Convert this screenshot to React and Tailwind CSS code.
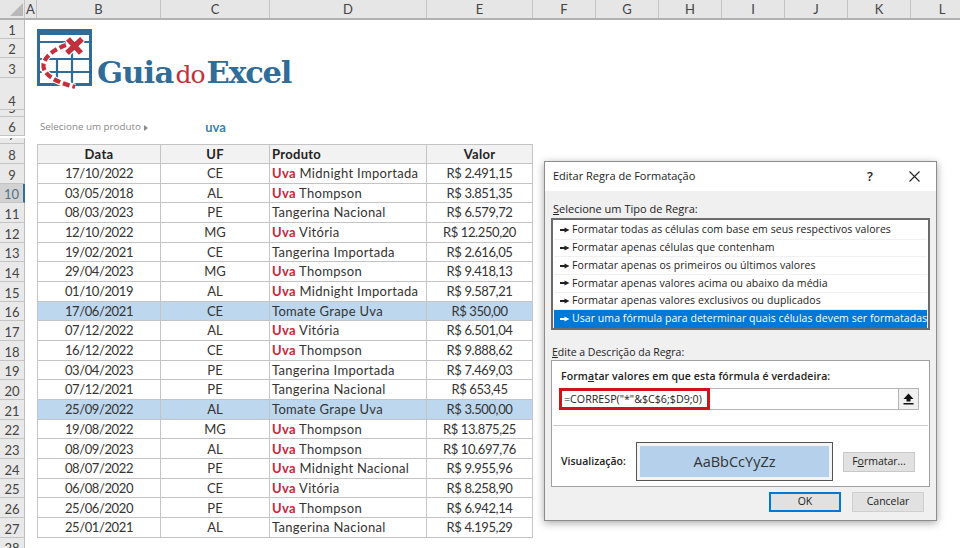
const cols = [["A", 12], ["B", 124], ["C", 109], ["D", 157], ["E", 106], ["F", 63], ["G", 63], ["H", 63], ["I", 63], ["J", 63], ["K", 63], ["L", 63]];

const data = [
  ["17/10/2022", "CE", "Uva", " Midnight Importada", "R$ 2.491,15"],
  ["03/05/2018", "AL", "Uva", " Thompson", "R$ 3.851,35"],
  ["08/03/2023", "PE", "", "Tangerina Nacional", "R$ 6.579,72"],
  ["12/10/2022", "MG", "Uva", " Vitória", "R$ 12.250,20"],
  ["19/02/2021", "CE", "", "Tangerina Importada", "R$ 2.616,05"],
  ["29/04/2023", "MG", "Uva", " Thompson", "R$ 9.418,13"],
  ["01/10/2019", "AL", "Uva", " Midnight Importada", "R$ 9.587,21"],
  ["17/06/2021", "CE", "", "Tomate Grape Uva", "R$ 350,00", true],
  ["07/12/2022", "AL", "Uva", " Vitória", "R$ 6.501,04"],
  ["16/12/2022", "CE", "Uva", " Thompson", "R$ 9.888,62"],
  ["03/04/2023", "PE", "", "Tangerina Importada", "R$ 7.469,03"],
  ["07/12/2021", "PE", "", "Tangerina Nacional", "R$ 653,45"],
  ["25/09/2022", "AL", "", "Tomate Grape Uva", "R$ 3.500,00", true],
  ["19/08/2022", "MG", "Uva", " Thompson", "R$ 13.875,25"],
  ["08/09/2023", "AL", "Uva", " Thompson", "R$ 10.697,76"],
  ["08/07/2022", "PE", "Uva", " Midnight Nacional", "R$ 9.955,96"],
  ["06/08/2020", "CE", "Uva", " Vitória", "R$ 8.258,90"],
  ["25/06/2020", "PE", "Uva", " Thompson", "R$ 6.942,14"],
  ["25/01/2021", "AL", "", "Tangerina Nacional", "R$ 4.195,29"],
];

const rules = [
  "Formatar todas as células com base em seus respectivos valores",
  "Formatar apenas células que contenham",
  "Formatar apenas os primeiros ou últimos valores",
  "Formatar apenas valores acima ou abaixo da média",
  "Formatar apenas valores exclusivos ou duplicados",
  "Usar uma fórmula para determinar quais células devem ser formatadas",
];

function RowHead({ n, h, active }) {
  return (
    <div
      style={{ height: h }}
      className={`w-[25px] shrink-0 flex items-end justify-center overflow-hidden border-b border-[#c4c4c4] text-[13px] leading-[15px] ${
        active ? "bg-[#d2d2d2] border-r-2 border-r-[#2f6f9f] text-[#55707f]" : "bg-[#e9e9e9] border-r border-r-[#bdbdbd] text-[#444]"
      }`}
    >
      {n}
    </div>
  );
}

function Logo() {
  return (
    <div className="absolute left-[37px] top-[29px] w-[260px] h-[64px]">
      <svg width="58" height="62" viewBox="0 0 58 62" className="absolute left-0 top-0">
        <g fill="none" stroke="#2f6c98">
          <rect x="1.5" y="1.5" width="52" height="54" strokeWidth="3" />
          <path d="M1 4h53" strokeWidth="4" />
          <path d="M2 13h52M2 30h52M2 43h52" strokeWidth="2.2" />
          <path d="M20 30v25M35 13v42" strokeWidth="2.2" />
        </g>
        <path d="M29 16C18 20 8 27 6.5 35C5 45 18 53 38 58" fill="none" stroke="#ffffff" strokeWidth="6.5" />
        <path d="M29 16C18 20 8 27 6.5 35C5 45 18 53 38 58" fill="none" stroke="#c1303c" strokeWidth="4.2" strokeDasharray="7 3" />
        <path d="M31 10l13 14M45 10l-15 14" fill="none" stroke="#ffffff" strokeWidth="8" />
        <path d="M31 10l13 14M45 10l-15 14" fill="none" stroke="#c1303c" strokeWidth="5.5" />
      </svg>
      <div className="absolute left-[60px] top-[24px] whitespace-nowrap font-['DejaVu_Serif',serif] font-bold text-[#2f6c98] text-[30.5px] leading-[38px] tracking-[-1.3px]">
        <span className="tracking-[-0.8px]">Guia</span>
        <span className="font-normal text-[#c1303c] text-[25px] tracking-[-1px] mx-[2px]">do</span>
        Excel
      </div>
    </div>
  );
}

function Btn({ children, className = "" }) {
  return (
    <div className={`flex items-center justify-center bg-[#e1e1e1] text-[#222] ${className}`}>{children}</div>
  );
}

function Dialog() {
  return (
    <div className="absolute left-[544px] top-[161px] w-[393px] h-[360px] flex flex-col bg-[#f0f0f0] border border-[#8c8c8c] shadow-[0_2px_8px_rgba(0,0,0,0.35)] font-['Open_Sans',sans-serif] text-[#222] text-[10.5px]">
      <div className="h-[29px] shrink-0 bg-white flex items-center pl-[8px] pr-[16px]">
        <span className="flex-1 text-[11px]">Editar Regra de Formatação</span>
        <span className="text-[13px] font-semibold mr-[36px]">?</span>
        <svg width="11" height="11" viewBox="0 0 11 11" fill="none" stroke="#222" strokeWidth="1.1"><path d="M.5.5l10 10M10.5.5l-10 10" /></svg>
      </div>
      <div className="pl-[8px] pt-[10px] h-[27px] shrink-0 leading-[16px] text-[11px]">
        <span className="underline">S</span>elecione um Tipo de Regra:
      </div>
      <div className="mx-[6px] h-[112px] shrink-0 border-2 border-[#6b6b6b] bg-white flex flex-col px-px pt-[2px]">
        {rules.map((r, i) => (
          <div
            key={r}
            className={`h-[17.7px] shrink-0 flex items-center whitespace-nowrap overflow-hidden pl-[6px] tracking-[0.07px] ${
              i === 5 ? "bg-[#0078d7] text-white" : "border-b border-[#f0f0f0]"
            }`}
          >
            <svg width="10" height="6" viewBox="0 0 10 6" className="mr-[1px] shrink-0">
              <path d="M0 2h4.5V0.5L9.5 3 4.5 5.5V4H0z" fill={i === 5 ? "#fff" : "#222"} />
            </svg>
            <span className="ml-[1px]">{r}</span>
          </div>
        ))}
      </div>
      <div className="pl-[7px] pt-[14px] h-[30px] shrink-0 leading-[16px] text-[10.5px]">
        <span className="underline">E</span>dite a Descrição da Regra:
      </div>
      <div className="mx-[6px] h-[127px] shrink-0 bg-white border border-[#a0a0a0] flex flex-col">
        <div className="pl-[9px] pt-[7px] h-[27px] shrink-0 font-semibold leading-[16px] tracking-[0.1px]">
          Form<span className="underline">a</span>tar valores em que esta fórmula é verdadeira:
        </div>
        <div className="ml-[7px] mr-[10px] h-[22px] shrink-0 flex border border-[#b5b5b5] relative">
          <div className="absolute -left-px -top-px w-[151px] h-[22px] border-[3px] border-[#d0121f] flex items-center pl-[2px] whitespace-nowrap text-[10.7px]">
            =CORRESP("*"&amp;$C$6;$D9;0)
          </div>
          <div className="ml-auto w-[20px] h-[20px] bg-[#f0f0f0] border-l border-[#b5b5b5] flex items-center justify-center">
            <svg width="11" height="12" viewBox="0 0 11 12" fill="#111"><path d="M5.5 0.5L10.5 6H7.5V8.5H3.5V6H0.5zM.5 10h10v1.5H.5z" /></svg>
          </div>
        </div>
        <div className="mx-[1px] mt-[15px] border-t border-[#c8c8c8] shrink-0" />
        <div className="flex items-center pl-[9px] mt-[16px]">
          <span className="w-[75px] font-semibold">Visualização:</span>
          <div className="w-[197px] h-[39px] border border-[#555] p-[3px] bg-[#f4f4f4] flex">
            <div className="flex-1 bg-[#b4d0ea] flex items-center justify-center text-[14.5px] text-[#333]">AaBbCcYyZz</div>
          </div>
          <Btn className="ml-[10px] w-[72px] h-[20px] border border-[#c8c8c8]">
            <span>F<span className="underline">o</span>rmatar...</span>
          </Btn>
        </div>
      </div>
      <div className="flex justify-end pr-[12px] pt-[5px] gap-[11px]">
        <Btn className="w-[72px] h-[20px] border-2 border-[#0078d7]">OK</Btn>
        <Btn className="w-[72px] h-[20px] border border-[#cfcfcf]">Cancelar</Btn>
      </div>
    </div>
  );
}

export default function App() {
  const rh = 19.68;
  const w = cols.map((c) => c[1]);
  return (
    <div className="relative w-[960px] h-[548px] overflow-hidden bg-white font-['Lato',sans-serif] text-[#333]">
      <div className="flex h-[20px] border-b-2 border-[#b0b0b0] bg-[#e6e6e6]">
        <div className="w-[25px] shrink-0 flex items-end justify-end border-r border-[#c4c4c4]">
          <svg width="13" height="13" viewBox="0 0 13 13" className="mb-[2px] mr-[1px]"><path d="M13 0v13H0z" fill="#b8b8b8" /></svg>
        </div>
        {cols.map(([l, cw]) => (
          <div key={l} style={{ width: cw }} className="shrink-0 flex items-center justify-center border-r border-[#c4c4c4] text-[13px] text-[#444] leading-none">
            {l}
          </div>
        ))}
      </div>

      {[
        [1, 19], [2, 19], [3, 20], [4, 32],
      ].map(([n, h]) => (
        <div key={n} className="flex"><RowHead n={n} h={h} /></div>
      ))}
      <div className="flex"><RowHead n={5} h={7} /></div>
      <div className="flex">
        <RowHead n={6} h={19} />
        <div style={{ marginLeft: w[0], width: w[1] }} className="shrink-0 pl-[3px] flex items-center font-['Open_Sans',sans-serif] text-[9.8px] text-[#8a8a8a] whitespace-nowrap">
          Selecione um produto
          <svg width="4" height="6" viewBox="0 0 4 6" className="ml-[3px]"><path d="M0 0l4 3-4 3z" fill="#8a8a8a" /></svg>
        </div>
        <div style={{ width: w[2] }} className="shrink-0 text-center text-[13px] font-bold leading-[21px] text-[#3d7fb8]">uva</div>
      </div>
      <div className="flex"><RowHead n={7} h={6} /></div>

      <div className="flex">
        <RowHead n={8} h={20} />
        <div style={{ marginLeft: w[0] }} className="flex border-t border-[#c4c4c4] bg-[#f2f2f2] font-bold text-[13px] text-[#222] border-l tracking-[0.3px]">
          {["Data", "UF", "Produto", "Valor"].map((t, i) => (
            <div key={t} style={{ width: i === 0 ? w[1] - 1 : w[i + 1] }} className={`h-[19px] pt-[1px] border-r border-b border-[#c4c4c4] flex items-center ${i === 2 ? "pl-[2px]" : "justify-center"}`}>
              {t}
            </div>
          ))}
        </div>
      </div>

      {data.map((d, idx) => (
        <div key={idx} className="flex">
          <RowHead n={idx + 9} h={rh} active={idx === 1} />
          <div style={{ marginLeft: w[0] }} className={`flex border-l border-[#c4c4c4] text-[13px] ${d[5] ? "bg-[#bdd7ee]" : ""}`}>
            <div style={{ width: w[1] - 1, height: rh }} className="pt-[1px] tracking-[-0.4px] border-r border-b border-[#c4c4c4] flex items-center justify-center">{d[0]}</div>
            <div style={{ width: w[2], height: rh }} className="pt-[1px] border-r border-b border-[#c4c4c4] flex items-center justify-center">{d[1]}</div>
            <div style={{ width: w[3], height: rh }} className="pt-[1px] tracking-[0.32px] border-r border-b border-[#c4c4c4] flex items-center pl-[2px] whitespace-pre">
              {d[2] && <span className="font-bold text-[#d0233a]">{d[2]}</span>}
              {d[3]}
            </div>
            <div style={{ width: w[4], height: rh }} className="pt-[1px] tracking-[-0.4px] border-r border-b border-[#c4c4c4] flex items-center justify-center">{d[4]}</div>
          </div>
        </div>
      ))}
      <div className="flex"><RowHead n={28} h={rh} /></div>

      <Logo />
      <Dialog />
    </div>
  );
}
